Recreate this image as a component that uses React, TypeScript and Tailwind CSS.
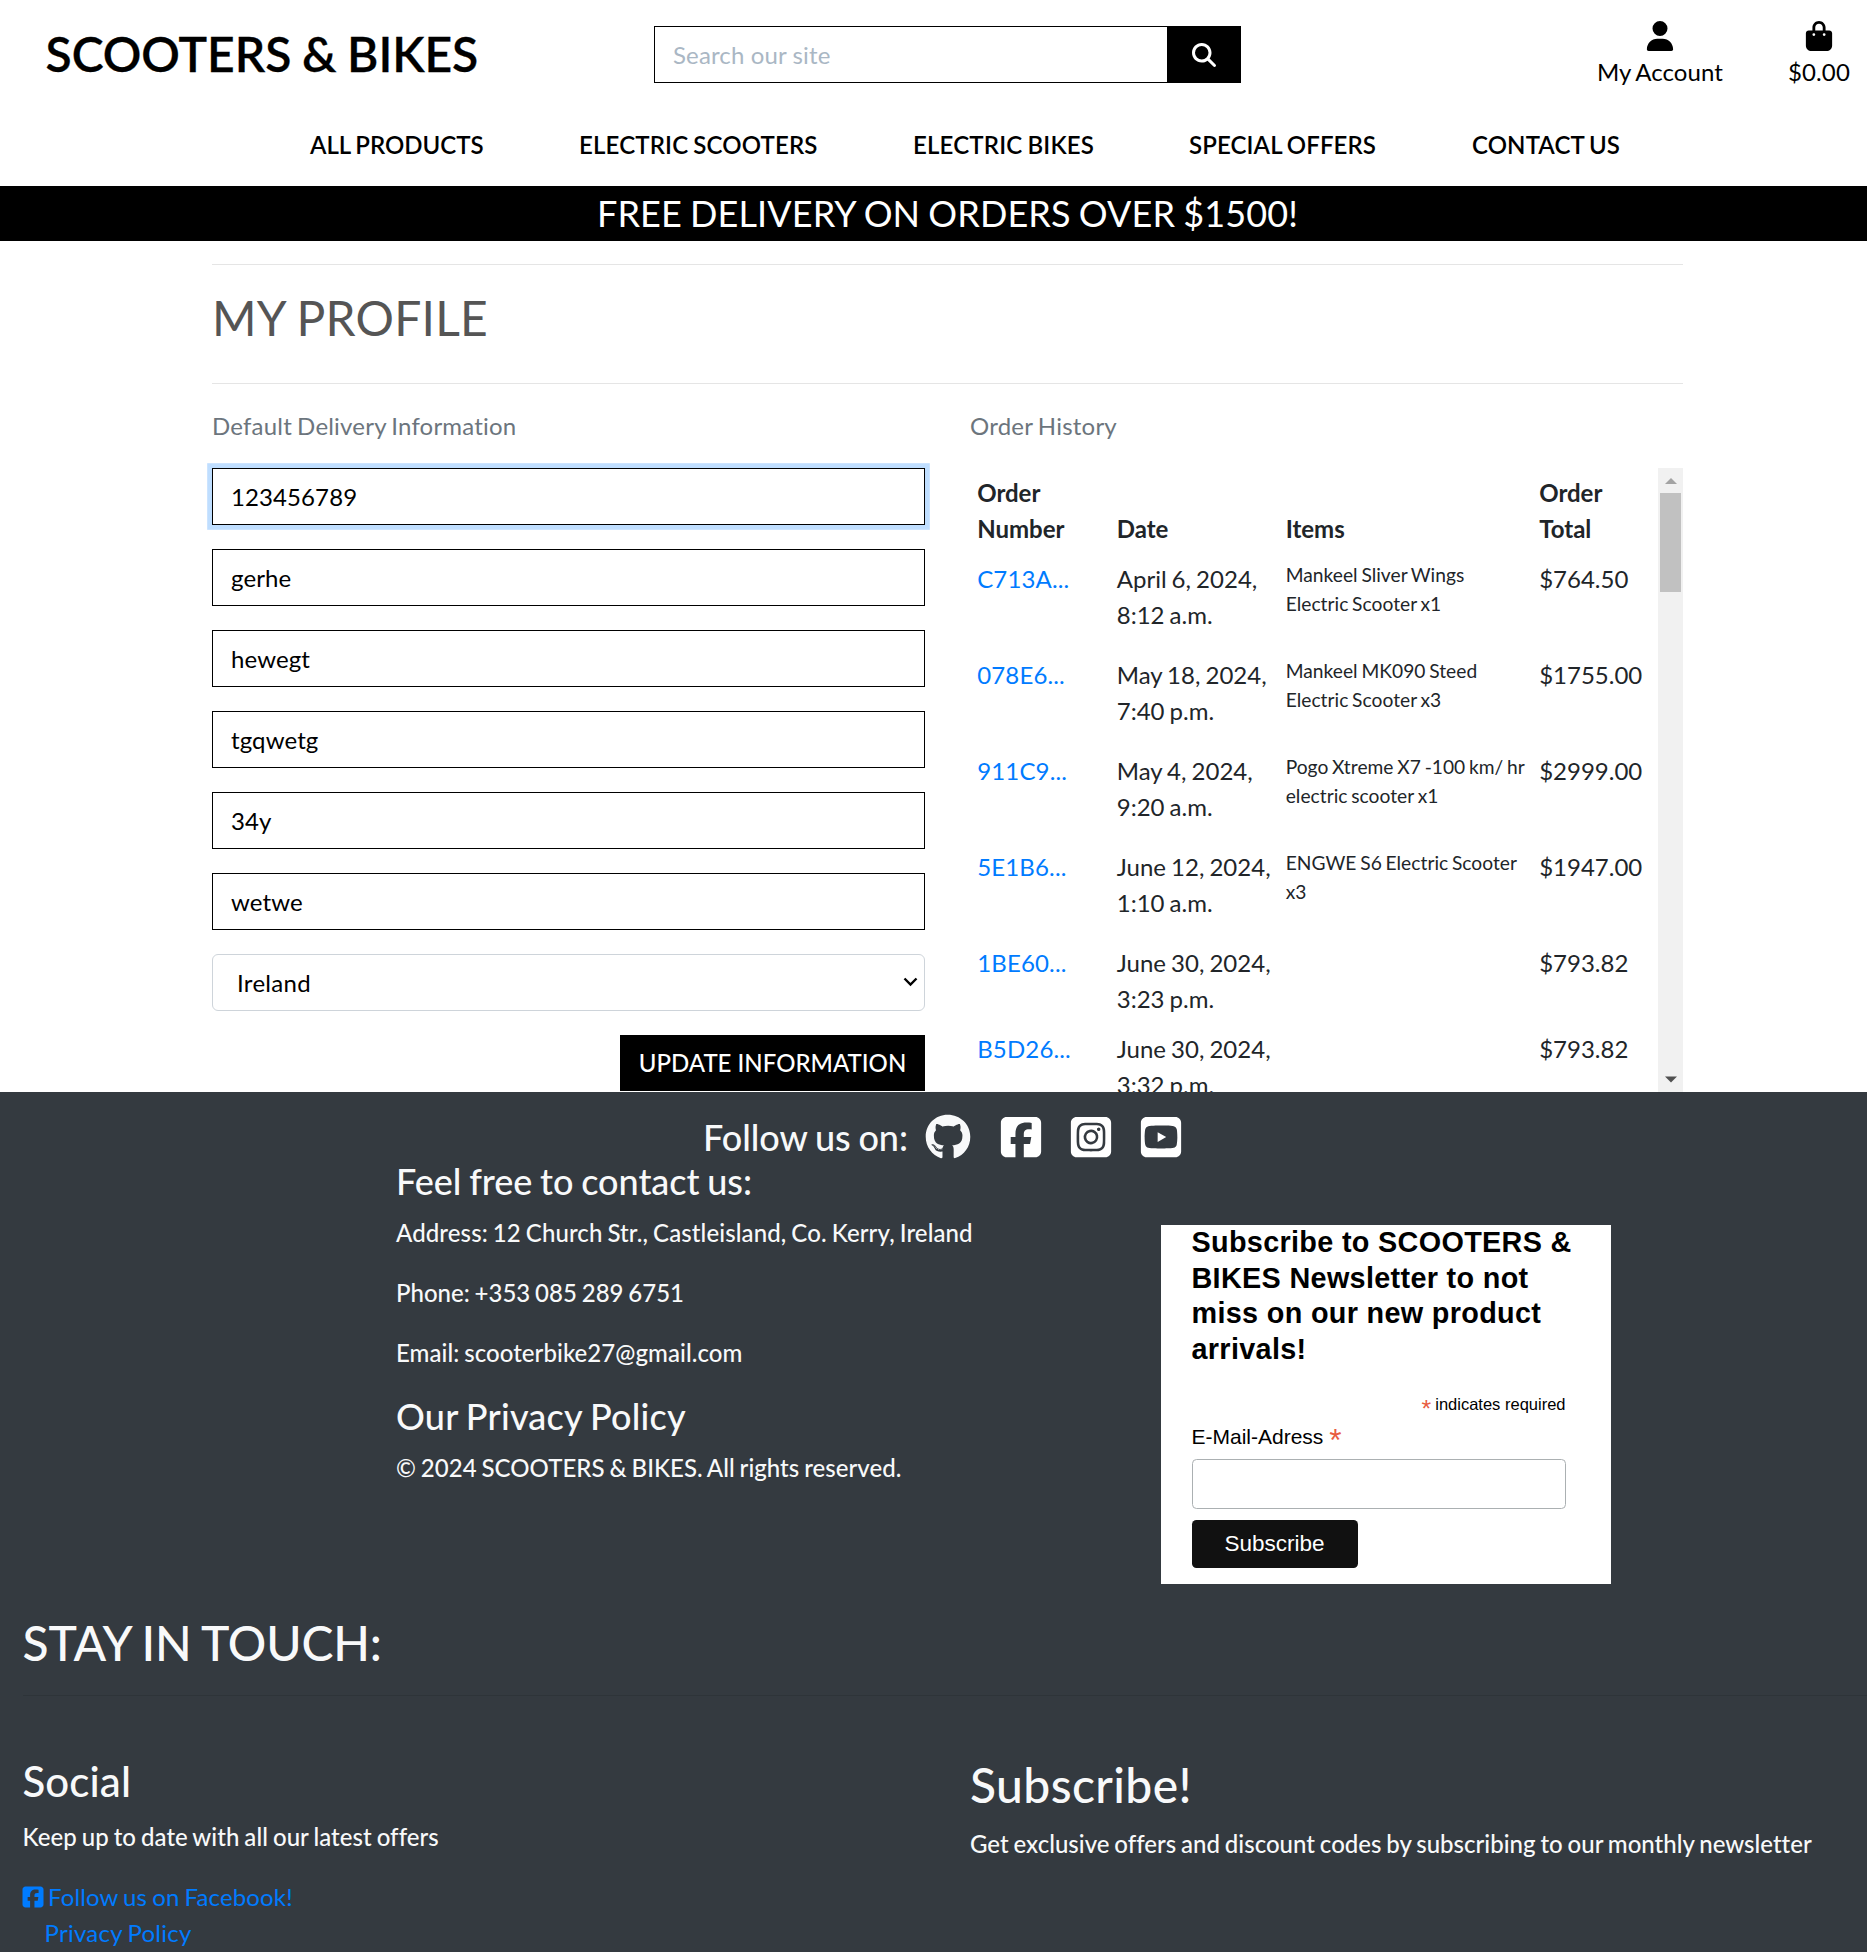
import type { ReactNode } from "react";
import {
  FaBagShopping,
  FaGithub,
  FaMagnifyingGlass,
  FaSquareFacebook,
  FaSquareInstagram,
  FaSquareYoutube,
  FaUser,
} from "react-icons/fa6";

const navItems = [
  { label: "ALL PRODUCTS", cls: "ml-[310px] w-[269px] tracking-normal" },
  { label: "ELECTRIC SCOOTERS", cls: "w-[334px] tracking-[0.16px]" },
  { label: "ELECTRIC BIKES", cls: "w-[276px] tracking-[0.18px]" },
  { label: "SPECIAL OFFERS", cls: "w-[283px]" },
  { label: "CONTACT US", cls: "" },
];

const fields = ["123456789", "gerhe", "hewegt", "tgqwetg", "34y", "wetwe"];

const orders = [
  { id: "C713A...", date: ["April 6, 2024,", "8:12 a.m."], items: ["Mankeel Sliver Wings", "Electric Scooter x1"], total: "$764.50" },
  { id: "078E6...", date: ["May 18, 2024,", "7:40 p.m."], items: ["Mankeel MK090 Steed", "Electric Scooter x3"], total: "$1755.00" },
  { id: "911C9...", date: ["May 4, 2024,", "9:20 a.m."], items: ["Pogo Xtreme X7 -100 km/ hr", "electric scooter x1"], total: "$2999.00" },
  { id: "5E1B6...", date: ["June 12, 2024,", "1:10 a.m."], items: ["ENGWE S6 Electric Scooter", "x3"], total: "$1947.00" },
  { id: "1BE60...", date: ["June 30, 2024,", "3:23 p.m."], items: [], total: "$793.82" },
  { id: "B5D26...", date: ["June 30, 2024,", "3:32 p.m."], items: [], total: "$793.82" },
];

const columns = "grid grid-cols-[139.5px_169px_253.5px_1fr]";

function Header() {
  return (
    <header className="h-[186px] text-black">
      <div className="flex h-[126.5px] items-start">
        <h2 className="ml-[45.5px] mt-[25px] w-[608.5px] text-[48px] leading-[57.6px] font-semibold tracking-[-0.05px] [-webkit-text-stroke:0.3px_currentColor]">
          SCOOTERS &amp; BIKES
        </h2>
        <form className="mt-[26px] flex h-[57px] w-[587px]">
          <input
            className="w-[513px] border border-r-0 border-black px-[18px] tracking-[0.13px] outline-none placeholder:text-[#aab7c4]"
            placeholder="Search our site"
          />
          <button type="button" className="flex flex-1 items-center justify-center bg-black text-white">
            <FaMagnifyingGlass size={24} />
          </button>
        </form>
        <a className="ml-[355px] mt-[21px] flex w-[128px] flex-col items-center whitespace-nowrap">
          <FaUser size={30} />
          <span className="mt-[3px] leading-[36px]">My Account</span>
        </a>
        <a className="ml-[64px] mt-[21px] flex w-[62px] flex-col items-center">
          <FaBagShopping size={30} />
          <span className="mt-[3px] leading-[36px]">$0.00</span>
        </a>
      </div>
      <nav className="flex leading-[36px] font-semibold whitespace-nowrap">
        {navItems.map((item) => (
          <a key={item.label} className={item.cls}>{item.label}</a>
        ))}
      </nav>
    </header>
  );
}

function DeliveryForm() {
  return (
    <section className="w-[713px]">
      <p className="mb-6 leading-[36px] tracking-[0.2px] text-[#6c757d]">Default Delivery Information</p>
      <form className="flex flex-col gap-6">
        {fields.map((value, i) => (
          <input
            key={value}
            readOnly
            value={value}
            className={`h-[57px] border border-black pl-[18px] text-black outline-none ${
              i === 0 ? "shadow-[0_0_0_4.8px_rgba(0,123,255,0.25)]" : ""
            }`}
          />
        ))}
        <div className="flex h-[57px] items-center justify-between rounded-[6px] border border-[#ced4da] pt-[2px] pr-[6px] pl-6 tracking-[0.3px] text-black">
          <span>Ireland</span>
          <svg width="15" height="10" viewBox="0 0 15 10" fill="none" stroke="currentColor" strokeWidth="2.4" className="mb-[2px]">
            <path d="M1.5 1.5 7.5 7.5 13.5 1.5" />
          </svg>
        </div>
        <button type="button" className="flex h-[56px] w-[305px] items-center justify-center self-end bg-black pt-px font-medium tracking-normal text-white">
          UPDATE INFORMATION
        </button>
      </form>
    </section>
  );
}

function Cell({ children, className = "" }: { children?: ReactNode; className?: string }) {
  return <div className={`px-[7.2px] py-[7.2px] whitespace-nowrap ${className}`}>{children}</div>;
}

function OrderHistory() {
  return (
    <section className="ml-[45px] w-[713px]">
      <p className="mb-6 leading-[36px] tracking-[0.22px] text-[#6c757d]">Order History</p>
      <div className="flex h-[624px] overflow-hidden">
        <div className="w-[688px] leading-[36px] tracking-normal text-[#212529]">
          <div className={`${columns} h-[86.4px] items-end font-bold`}>
            <Cell>Order<br />Number</Cell>
            <Cell>Date</Cell>
            <Cell>Items</Cell>
            <Cell>Order<br />Total</Cell>
          </div>
          {orders.map((order) => (
            <div key={order.id} className={`${columns} ${order.items.length ? "h-[96px]" : "h-[85.6px]"}`}>
              <Cell className="tracking-[0.15px] text-[#007bff]">{order.id}</Cell>
              <Cell className="tracking-[0.03px]">{order.date[0]}<br />{order.date[1]}</Cell>
              <Cell className="text-[19.2px] leading-[28.8px] tracking-[0.03px]">
                {order.items.map((line) => <div key={line}>{line}</div>)}
              </Cell>
              <Cell>{order.total}</Cell>
            </div>
          ))}
        </div>
        <div className="flex w-[25px] flex-col items-center justify-between bg-[#f1f1f1]">
          <div className="flex flex-col items-center">
            <svg width="12" height="25" viewBox="0 0 12 25" fill="#a3a3a3"><path d="M0 16h12L6 10z" /></svg>
            <div className="h-[99px] w-[21px] bg-[#c1c1c1]" />
          </div>
          <svg width="12" height="25" viewBox="0 0 12 25" fill="#505050"><path d="M0 9.500h12L6 15.500z" /></svg>
        </div>
      </div>
    </section>
  );
}

function Newsletter() {
  return (
    <div className="mt-[65px] h-[359px] w-[450px] shrink-0 bg-white px-[30.5px] font-['Liberation_Sans',Arial,sans-serif] tracking-normal text-black [word-spacing:0]">
      <h2 className="h-[142px] text-[28.8px] leading-[35.5px] font-bold tracking-[0.32px] whitespace-nowrap">
        Subscribe to SCOOTERS &amp;<br />BIKES Newsletter to not<br />miss on our new product<br />arrivals!
      </h2>
      <div className="mt-[20px] mr-[15px] flex h-[34px] items-center justify-end text-[16.5px] leading-[34px]">
        <span className="relative top-[5px] mr-[4px] text-[24.75px] text-[#e85c41]">*</span>
        indicates required
      </div>
      <label className="flex h-[32px] items-center text-[21px] leading-[32px]">
        E-Mail-Adress
        <span className="relative top-[3px] ml-[6px] text-[31.5px] text-[#e85c41]">*</span>
      </label>
      <input readOnly className="mt-[5.5px] block h-[50px] w-[374px] rounded-[4.5px] border border-[#abb0b2] outline-none" />
      <button type="button" className="mt-[11.5px] block h-[48px] w-[166px] rounded-[4.5px] bg-[#111] text-[22.5px] leading-[48px] text-white">
        Subscribe
      </button>
    </div>
  );
}

function Footer() {
  return (
    <footer className="h-[860px] bg-[#343a40] text-[#f8f9fa]">
      <div className="flex h-[68px] items-start pl-[703px] text-[36px]">
        <h4 className="mt-[24px] w-[221.5px] leading-[43.2px] font-medium tracking-[-0.05px]">Follow us on:</h4>
        <div className="mt-[22px] flex items-center">
          <FaGithub size={46} />
          <FaSquareFacebook size={46} className="ml-[27px] text-white" />
          <FaSquareInstagram size={46} className="ml-6 text-white" />
          <FaSquareYoutube size={46} className="ml-6 text-white" />
        </div>
      </div>
      <div className="flex h-[454px] pl-[396px]">
        <div className="w-[765px] leading-[36px] font-medium">
          <h4 className="mb-3 text-[36px] leading-[43.2px] tracking-[-0.05px]">Feel free to contact us:</h4>
          <p className="mb-6">Address: 12 Church Str., Castleisland, Co. Kerry, Ireland</p>
          <p className="mb-6 tracking-normal">Phone: +353 085 289 6751</p>
          <p className="mb-6 tracking-[0.05px]">Email: scooterbike27@gmail.com</p>
          <h4 className="mb-3 text-[36px] leading-[43.2px] tracking-[0.2px]">Our Privacy Policy</h4>
          <p className="tracking-[0.03px]">© 2024 SCOOTERS &amp; BIKES. All rights reserved.</p>
        </div>
        <Newsletter />
      </div>
      <div className="ml-[22.5px]">
        <h1 className="text-[48px] leading-[57.6px] font-medium tracking-[-0.15px]">STAY IN TOUCH:</h1>
        <hr className="mt-[23px] border-t border-black/10" />
        <div className="mt-[60px] flex">
          <div className="w-[947.5px] leading-[36px]">
            <h3 className="mb-[13px] text-[42px] leading-[50.4px] font-medium tracking-[0.1px]">Social</h3>
            <p className="mb-6 font-medium tracking-[0.06px]">Keep up to date with all our latest offers</p>
            <a className="flex items-center tracking-[0.13px] text-[#007bff]">
              <FaSquareFacebook size={24} className="mr-[3px] -ml-[1.5px]" />
              Follow us on Facebook!
            </a>
            <a className="block pl-[22px] tracking-[0.25px] text-[#007bff]">Privacy Policy</a>
          </div>
          <div className="leading-[36px] font-medium whitespace-nowrap">
            <h1 className="mb-[13px] text-[48px] leading-[57.6px] tracking-[0.4px]">Subscribe!</h1>
            <p className="tracking-[0.01px]">Get exclusive offers and discount codes by subscribing to our monthly newsletter</p>
          </div>
        </div>
      </div>
    </footer>
  );
}

export default function App() {
  return (
    <div className="h-[1952px] w-full overflow-hidden bg-white font-[Lato,sans-serif] text-[24px] leading-[36px] tracking-[0.1px] [word-spacing:-0.05em]">
      <Header />
      <div className="h-[55px] w-full bg-black pt-[6px] pl-[28px] text-center text-[36px] leading-[43.2px] tracking-[0.12px] text-white">
        FREE DELIVERY ON ORDERS OVER $1500!
      </div>
      <main className="ml-[212px] h-[851px] w-[1471px] pt-[23px]">
        <hr className="border-t border-black/10" />
        <h2 className="mt-6 text-[48px] leading-[57.6px] tracking-[0.24px] text-[#555]">MY PROFILE</h2>
        <hr className="mt-9 mb-6 border-t border-black/10" />
        <div className="flex">
          <DeliveryForm />
          <OrderHistory />
        </div>
      </main>
      <Footer />
    </div>
  );
}
